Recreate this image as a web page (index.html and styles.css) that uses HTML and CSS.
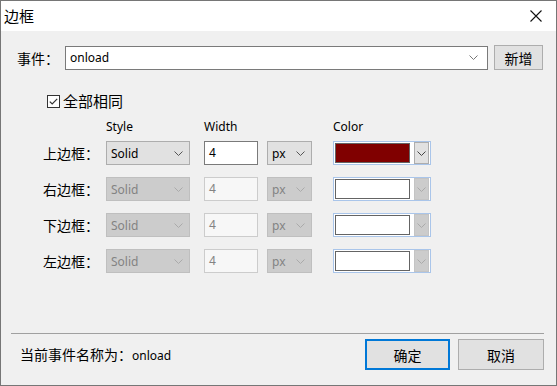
FILE: index.html
```html
<!DOCTYPE html>
<html lang="zh-CN">
<head>
    <meta charset="UTF-8">
    <title>边框</title>
    <link rel="stylesheet" href="styles.css">
</head>
<body>

    <div class="window">
        <!-- barra de título -->
        <div class="titlebar">
            <span class="title">边框</span>
            <svg class="close" width="12" height="12" viewBox="0 0 12 12">
                <path d="M0.5 0.5 L11.5 11.5 M11.5 0.5 L0.5 11.5" stroke="#111" stroke-width="1.1" fill="none"/>
            </svg>
        </div>

        <div class="content">
            <div class="event-row">
                <span class="event-label">事件<span class="colon">：</span></span>
                <div class="combo">
                    <span>onload</span>
                    <svg class="arrow" width="9" height="5" viewBox="0 0 9 5"><path d="M0.5 0.5 L4.5 4.5 L8.5 0.5" stroke="#777" fill="none"/></svg>
                </div>
                <button class="btn-add">新增</button>
            </div>

            <label class="check-row">
                <svg class="checkbox" width="13" height="13" viewBox="0 0 13 13">
                    <rect x="0.5" y="0.5" width="12" height="12" fill="#fff" stroke="#333"/>
                    <path d="M2.8 6.6 L5.2 9 L10.2 3.8" stroke="#333" stroke-width="1.2" fill="none"/>
                </svg>
                <span>全部相同</span>
            </label>

            <div class="grid">
                <span></span>
                <span class="col-head">Style</span>
                <span class="col-head">Width</span>
                <span></span>
                <span class="col-head">Color</span>

                <!-- fila superior (activa) -->
                <span class="row-label">上边框<span class="colon">：</span></span>
                <div class="select sel-style"><span>Solid</span><svg class="arrow" width="9" height="5" viewBox="0 0 9 5"><path d="M0.5 0.5 L4.5 4.5 L8.5 0.5" stroke="#555" fill="none"/></svg></div>
                <div class="num-input">4</div>
                <div class="select sel-unit"><span>px</span><svg class="arrow" width="9" height="5" viewBox="0 0 9 5"><path d="M0.5 0.5 L4.5 4.5 L8.5 0.5" stroke="#555" fill="none"/></svg></div>
                <div class="color-combo"><div class="swatch" style="background:#800000"></div><div class="color-btn"><svg width="9" height="5" viewBox="0 0 9 5"><path d="M0.5 0.5 L4.5 4.5 L8.5 0.5" stroke="#444" fill="none"/></svg></div></div>

                <span class="row-label">右边框<span class="colon">：</span></span>
                <div class="select sel-style disabled"><span>Solid</span><svg class="arrow" width="9" height="5" viewBox="0 0 9 5"><path d="M0.5 0.5 L4.5 4.5 L8.5 0.5" stroke="#aaa" fill="none"/></svg></div>
                <div class="num-input disabled">4</div>
                <div class="select sel-unit disabled"><span>px</span><svg class="arrow" width="9" height="5" viewBox="0 0 9 5"><path d="M0.5 0.5 L4.5 4.5 L8.5 0.5" stroke="#aaa" fill="none"/></svg></div>
                <div class="color-combo"><div class="swatch"></div><div class="color-btn disabled"><svg width="9" height="5" viewBox="0 0 9 5"><path d="M0.5 0.5 L4.5 4.5 L8.5 0.5" stroke="#aaa" fill="none"/></svg></div></div>

                <span class="row-label">下边框<span class="colon">：</span></span>
                <div class="select sel-style disabled"><span>Solid</span><svg class="arrow" width="9" height="5" viewBox="0 0 9 5"><path d="M0.5 0.5 L4.5 4.5 L8.5 0.5" stroke="#aaa" fill="none"/></svg></div>
                <div class="num-input disabled">4</div>
                <div class="select sel-unit disabled"><span>px</span><svg class="arrow" width="9" height="5" viewBox="0 0 9 5"><path d="M0.5 0.5 L4.5 4.5 L8.5 0.5" stroke="#aaa" fill="none"/></svg></div>
                <div class="color-combo"><div class="swatch"></div><div class="color-btn disabled"><svg width="9" height="5" viewBox="0 0 9 5"><path d="M0.5 0.5 L4.5 4.5 L8.5 0.5" stroke="#aaa" fill="none"/></svg></div></div>

                <span class="row-label">左边框<span class="colon">：</span></span>
                <div class="select sel-style disabled"><span>Solid</span><svg class="arrow" width="9" height="5" viewBox="0 0 9 5"><path d="M0.5 0.5 L4.5 4.5 L8.5 0.5" stroke="#aaa" fill="none"/></svg></div>
                <div class="num-input disabled">4</div>
                <div class="select sel-unit disabled"><span>px</span><svg class="arrow" width="9" height="5" viewBox="0 0 9 5"><path d="M0.5 0.5 L4.5 4.5 L8.5 0.5" stroke="#aaa" fill="none"/></svg></div>
                <div class="color-combo"><div class="swatch"></div><div class="color-btn disabled"><svg width="9" height="5" viewBox="0 0 9 5"><path d="M0.5 0.5 L4.5 4.5 L8.5 0.5" stroke="#aaa" fill="none"/></svg></div></div>
            </div>
        </div>

        <!-- pie con estado y botones -->
        <div class="footer">
            <span class="status">当前事件名称为<span class="colon">：</span><span class="latin">onload</span></span>
            <div class="footer-buttons">
                <button class="btn btn-ok">确定</button>
                <button class="btn">取消</button>
            </div>
        </div>
    </div>

</body>
</html>
```

FILE: styles.css
```css
/* --- Generales --- */
html, body {
    margin: 0;
    padding: 0;
}
body {
    font-family: "Noto Sans CJK SC", sans-serif;
    font-size: 14px;
    color: #000;
    background: #f0f0f0;
}
.latin, .combo, .select, .num-input, .col-head {
    font-family: "Noto Sans", "Noto Sans CJK SC", sans-serif;
    font-size: 12px;
}
/* dos puntos centrados, como en la fuente del sistema */
.colon { font-family: "Noto Sans CJK JP", sans-serif; }

/* --- Ventana --- */
.window {
    width: 557px;
    height: 386px;
    box-sizing: border-box;
    border: 1px solid #767676;
    display: flex;
    flex-direction: column;
    background: #f0f0f0;
}
.titlebar {
    height: 30px;
    background: #fff;
    display: flex;
    align-items: center;
    justify-content: space-between;
    padding-left: 3px;
}
.title { font-size: 15px; line-height: 20px; margin-top: -1px; }
.close { margin-right: 14px; margin-top: -1px; }

.content {
    flex: 1;
    padding: 14px 12px 0 16px;
}

/* --- Fila de evento --- */
.event-row {
    display: flex;
    align-items: center;
    height: 25px;
}
.event-label { width: 48px; line-height: 20px; }
.combo {
    width: 423px;
    height: 24px;
    box-sizing: border-box;
    border: 1px solid #7a7a7a;
    background: #fff;
    display: flex;
    align-items: center;
    justify-content: space-between;
    padding: 0 9px 0 4px;
}
.btn-add {
    margin-left: 6px;
    width: 49px;
    height: 25px;
    border: 1px solid #adadad;
    background: #e1e1e1;
    font-family: "Noto Sans CJK SC", sans-serif;
    font-size: 14px;
    padding: 0;
    color: #000;
}

/* --- Casilla --- */
.check-row {
    display: flex;
    align-items: center;
    gap: 3px;
    margin: 23px 0 0 30px;
    font-size: 15px;
    line-height: 16px;
}

/* --- Tabla de bordes --- */
.grid {
    display: grid;
    grid-template-columns: 63px 98px 63px 66px 98px;
    grid-template-rows: 10px repeat(4, 24px);
    row-gap: 12px;
    margin: 10px 0 0 26px;
    align-items: center;
    justify-items: start;
}
.grid .col-head {
    align-self: start;
    line-height: 16px;
}
.row-label { line-height: 20px; }

.select {
    height: 24px;
    box-sizing: border-box;
    border: 1px solid #adadad;
    background: #e1e1e1;
    display: flex;
    align-items: center;
    justify-content: space-between;
    padding: 0 6px 0 4px;
}
.sel-style { width: 84px; }
.sel-unit { width: 45px; }
.select.disabled {
    background: #cccccc;
    border-color: #bfbfbf;
    color: #838383;
}

.num-input {
    width: 54px;
    height: 24px;
    box-sizing: border-box;
    border: 1px solid #7a7a7a;
    background: #fff;
    padding: 0 4px;
    line-height: 22px;
}
.num-input.disabled {
    border-color: #cccccc;
    background: #f7f7f7;
    color: #838383;
}

.color-combo {
    width: 98px;
    height: 24px;
    box-sizing: border-box;
    border: 1px solid #a9c5ea;
    background: #fff;
    display: flex;
    align-items: center;
    padding: 0 1px;
    gap: 4px;
}
.swatch {
    width: 75px;
    height: 20px;
    box-sizing: border-box;
    border: 1px solid #646464;
    background: #fff;
}
.color-btn {
    width: 15px;
    height: 22px;
    box-sizing: border-box;
    border: 1px solid #adadad;
    background: #e1e1e1;
    display: flex;
    align-items: center;
    justify-content: center;
}
.color-btn.disabled {
    background: #cccccc;
    border-color: #c4c4c4;
}

/* --- Pie --- */
.footer {
    margin: 0 12px 0 10px;
    border-top: 1px solid #a0a0a0;
    padding: 5px 0 15px 9px;
    display: flex;
    align-items: center;
    justify-content: space-between;
}
.status { line-height: 20px; }
.footer-buttons { display: flex; gap: 8px; }
.btn {
    width: 86px;
    height: 31px;
    box-sizing: border-box;
    border: 1px solid #adadad;
    background: #e1e1e1;
    font-family: "Noto Sans CJK SC", sans-serif;
    font-size: 14px;
    color: #000;
    padding: 0;
}
.btn-ok {
    width: 85px;
    border: 2px solid #0078d7;
}
```
